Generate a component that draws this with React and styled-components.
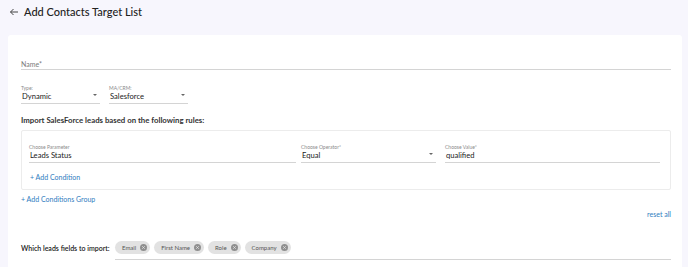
import React from "react";
import styled, { createGlobalStyle } from "styled-components";

const Global = createGlobalStyle`
  html, body { margin: 0; padding: 0; background: #f7f6fd; }
  body { font-family: "Lato", "Open Sans", sans-serif; color: #222; }
`;

const Page = styled.div`
  width: 688px;
  height: 267px;
  overflow: hidden;
  display: flex;
  flex-direction: column;
`;

const Header = styled.div`
  height: 35px;
  display: flex;
  align-items: flex-start;
  padding: 5px 0 0 9px;
  box-sizing: border-box;
  gap: 5px;
`;

const Title = styled.h1`
  margin: 0;
  font-size: 11px;
  font-weight: 500;
  line-height: 14px;
  color: #222;
`;

const Back = styled.svg`
  width: 10px;
  height: 10px;
  margin-top: 2px;
`;

const Card = styled.div`
  margin: 0 6px 0 8px;
  flex: 1;
  background: #fff;
  border-radius: 3px 3px 0 0;
  padding: 0 11px 0 13px;
  display: flex;
  flex-direction: column;
`;

const NameField = styled.div`
  margin-top: 23px;
  height: 11px;
  border-bottom: 1px solid #d4d4d4;
  font-size: 7px;
  color: #7a7a7a;
  display: flex;
  align-items: center;
`;

const Row = styled.div`
  display: flex;
  gap: ${p => p.gap || 8}px;
  margin-top: ${p => p.mt || 0}px;
`;

const Field = styled.div`
  width: ${p => p.w}px;
  ${p => p.grow && "flex: 1;"}
  margin-left: ${p => p.ml || 0}px;
  border-bottom: 1px solid #d4d4d4;
  position: relative;
  padding-bottom: 2px;
`;

const Label = styled.div`
  font-size: 5px;
  color: #8a8a8a;
  line-height: 6px;
`;

const Value = styled.div`
  font-size: 7.6px;
  line-height: 10px;
  color: #222;
  padding-left: 1px;
`;

const Arrow = styled.span`
  position: absolute;
  right: 3px;
  top: 9px;
  width: 0;
  height: 0;
  border-left: 2px solid transparent;
  border-right: 2px solid transparent;
  border-top: 2.5px solid #666;
`;

const Section = styled.div`
  font-size: 7.8px;
  font-weight: 700;
  color: #333;
  margin-top: ${p => p.mt}px;
  line-height: 9px;
`;

const RuleBox = styled.div`
  margin-top: 5px;
  border: 1px solid #ececec;
  border-radius: 2px;
  height: 60px;
  box-sizing: border-box;
  padding: 13px 10px 0 7px;
  display: flex;
  flex-direction: column;
`;

const Link = styled.div`
  font-size: 7px;
  color: #2f7dc0;
  line-height: 9px;
  margin-top: ${p => p.mt}px;
  ${p => p.right && "align-self: flex-end;"}
  margin-left: ${p => p.ml || 0}px;
`;

const ImportRow = styled.div`
  display: flex;
  align-items: flex-start;
  margin-top: 22px;
`;

const ImportLabel = styled.div`
  font-size: 7px;
  font-weight: 600;
  color: #222;
  width: 94px;
  padding-top: 3px;
`;

const ChipArea = styled.div`
  flex: 1;
  display: flex;
  gap: 4px;
  border-bottom: 1px solid #d4d4d4;
  padding-bottom: 5px;
`;

const Chip = styled.div`
  height: 13px;
  border-radius: 7px;
  background: #e2e2e2;
  display: flex;
  align-items: center;
  gap: 4px;
  padding: 0 3px 0 7px;
  font-size: 6px;
  color: #555;
`;

const X = () => (
  <svg width="7" height="7" viewBox="0 0 10 10">
    <circle cx="5" cy="5" r="5" fill="#8f8f8f" />
    <path d="M3.3 3.3 L6.7 6.7 M6.7 3.3 L3.3 6.7" stroke="#e2e2e2" strokeWidth="1.3" />
  </svg>
);

export default function App() {
  return (
    <Page>
      <Global />
      <Header>
        <Back viewBox="0 0 10 10">
          <path d="M9 5 H1.5 M4.5 2 L1.5 5 L4.5 8" stroke="#444" strokeWidth="1" fill="none" />
        </Back>
        <Title>Add Contacts Target List</Title>
      </Header>
      <Card>
        <NameField>Name*</NameField>
        <Row gap={9} mt={15}>
          <Field w={79}>
            <Label>Type:</Label>
            <Value>Dynamic</Value>
            <Arrow />
          </Field>
          <Field w={79}>
            <Label>MA/CRM:</Label>
            <Value>Salesforce</Value>
            <Arrow />
          </Field>
        </Row>
        <Section mt={12}>Import SalesForce leads based on the following rules:</Section>
        <RuleBox>
          <Row gap={5}>
            <Field w={267}>
              <Label>Choose Parameter</Label>
              <Value>Leads Status</Value>
            </Field>
            <Field w={135}>
              <Label>Choose Operator*</Label>
              <Value>Equal</Value>
              <Arrow />
            </Field>
            <Field grow ml={4}>
              <Label>Choose Value*</Label>
              <Value>qualified</Value>
            </Field>
          </Row>
          <Link mt={10} ml={1}>+ Add Condition</Link>
        </RuleBox>
        <Link mt={5}>+ Add Conditions Group</Link>
        <Link mt={6} right>reset all</Link>
        <ImportRow>
          <ImportLabel>Which leads fields to import:</ImportLabel>
          <ChipArea>
            <Chip>Email <X /></Chip>
            <Chip>First Name <X /></Chip>
            <Chip>Role <X /></Chip>
            <Chip>Company <X /></Chip>
          </ChipArea>
        </ImportRow>
      </Card>
    </Page>
  );
}
